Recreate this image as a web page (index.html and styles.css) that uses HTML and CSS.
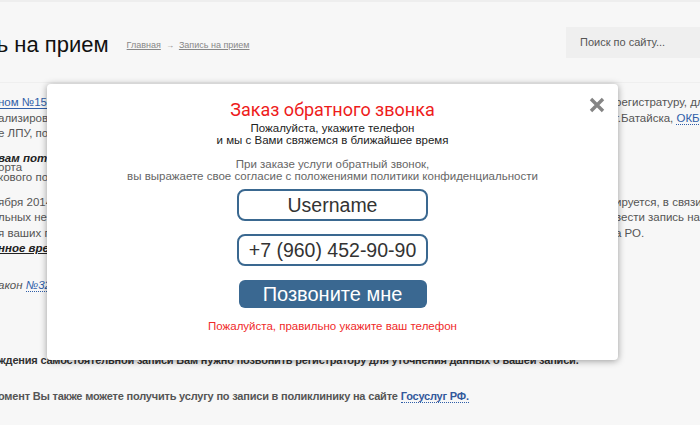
FILE: index.html
```html
<!DOCTYPE html>
<html lang="ru">
<head>
<meta charset="utf-8">
<title>Запись на прием</title>
<link rel="stylesheet" href="styles.css">
</head>
<body>
<div class="page">
  <header class="header">
    <h1 class="title">Запись на прием</h1>
    <nav class="crumbs"><a href="#">Главная</a><span class="arrow">→</span><a href="#">Запись на прием</a></nav>
    <div class="search">Поиск по сайту...</div>
  </header>
  <main class="content">
    <div class="para p1">
      <div class="ln"><span class="l"><a class="lnk solid" href="#">ном №152</a></span><span class="r">регистратуру, для</span></div>
      <div class="ln"><span class="l">ализирова</span><span class="r">г.Батайска, <a class="lnk" href="#">ОКБ РО</a></span></div>
      <div class="ln"><span class="l">е ЛПУ, под</span><span class="r"></span></div>
    </div>
    <div class="para p2">
      <div class="ln"><span class="l bi">вам потр</span><span class="r"></span></div>
      <div class="ln"><span class="l">орта</span><span class="r"></span></div>
      <div class="ln"><span class="l">кового пол</span><span class="r"></span></div>
    </div>
    <div class="para p3">
      <div class="ln"><span class="l">ября 2014</span><span class="r">ируется, в связи с</span></div>
      <div class="ln"><span class="l">льных не</span><span class="r">вести запись на</span></div>
      <div class="ln"><span class="l">я ваших п</span><span class="r">а РО.</span></div>
      <div class="ln"><span class="l bi ul">нное вре</span><span class="r"></span></div>
    </div>
    <div class="para p4">
      <div class="ln"><span class="l it">акон <a class="lnk" href="#">№323</a></span><span class="r"></span></div>
    </div>
    <p class="wide dark">ждения самостоятельной записи Вам нужно позвонить регистратору для уточнения данных о вашей записи.</p>
    <p class="wide grey">омент Вы также можете получить услугу по записи в поликлинику на сайте <a class="lnk" href="#">Госуслуг РФ.</a></p>
  </main>

  <div class="modal">
    <button class="close" aria-label="Закрыть">
      <svg width="16" height="16" viewBox="0 0 16 16"><path d="M2 2 L14 14 M14 2 L2 14" stroke="#858585" stroke-width="3.4" stroke-linecap="butt"/></svg>
    </button>
    <h2 class="m-title">Заказ обратного звонка</h2>
    <p class="m-sub">Пожалуйста, укажите телефон<br>и мы с Вами свяжемся в ближайшее время</p>
    <p class="m-policy">При заказе услуги обратный звонок,<br>вы выражаете свое согласие с положениями политики конфиденциальности</p>
    <input class="field first" type="text" value="Username">
    <input class="field" type="text" value="+7 (960) 452-90-90">
    <button class="call">Позвоните мне</button>
    <p class="m-error">Пожалуйста, правильно укажите ваш телефон</p>
  </div>
</div>
</body>
</html>
```

FILE: styles.css
```css
html, body {
  margin: 0;
  padding: 0;
}
body {
  background: #f7f7f7;
  font-family: "Liberation Sans", Arial, sans-serif;
  overflow: hidden;
  width: 700px;
  height: 425px;
  position: relative;
}
.page {
  width: 700px;
}
.header {
  display: flex;
  align-items: center;
  height: 80px;
  border-top: 2px solid #eeeeee;
  border-bottom: 1px solid #efefef;
}
.title {
  margin: 6px 0 0 -64px;
  font-size: 22px;
  font-weight: normal;
  color: #111;
  line-height: 26px;
  white-space: nowrap;
}
.crumbs {
  margin-left: 18px;
  margin-top: 5px;
  font-size: 9px;
  color: #888;
  white-space: nowrap;
}
.crumbs a {
  color: #888;
  text-decoration: underline;
}
.arrow {
  margin: 0 5px;
  font-size: 8px;
}
.search {
  margin-left: auto;
  width: 134px;
  height: 31px;
  background: #efefef;
  display: flex;
  align-items: center;
  padding-left: 14px;
  box-sizing: border-box;
  font-size: 11px;
  color: #555;
  white-space: nowrap;
}
.content {
  padding-top: 12px;
  font-size: 11.5px;
  color: #555;
}
.para {
  line-height: 15.5px;
}
.p2 {
  margin-top: 12px;
  line-height: 9.5px;
}
.p3 {
  margin-top: 12.5px;
}
.p4 {
  margin-top: 21px;
}
.ln {
  display: grid;
  grid-template-columns: 615px 85px;
  white-space: nowrap;
}
.l, .r {
  overflow: hidden;
  display: block;
}
.l {
  text-indent: -2px;
}
.bi {
  font-weight: bold;
  font-style: italic;
  color: #222;
}
.ul {
  text-decoration: underline;
}
.it {
  font-style: italic;
}
.lnk {
  color: #2f5ea8;
  text-decoration: none;
  border-bottom: 1px dotted #2f5ea8;
}
.lnk.solid {
  border-bottom-style: solid;
}
.wide {
  margin: 0;
  font-size: 11px;
  letter-spacing: -0.2px;
  font-weight: bold;
  white-space: nowrap;
  line-height: 15.5px;
  text-indent: -2px;
}
.wide.dark {
  margin-top: 60px;
  color: #333;
}
.wide.grey {
  margin-top: 20px;
  color: #555;
}
.wide .lnk {
  color: #33599c;
}

.modal {
  position: absolute;
  left: 47px;
  top: 84px;
  width: 571px;
  height: 276px;
  background: #fff;
  border-radius: 4px;
  box-shadow: 0 1px 7px rgba(0, 0, 0, 0.38);
  display: flex;
  flex-direction: column;
  align-items: center;
  box-sizing: border-box;
  padding-top: 15px;
  text-align: center;
}
.close {
  position: absolute;
  top: 13px;
  right: 13px;
  width: 16px;
  height: 16px;
  padding: 0;
  border: 0;
  background: none;
  display: block;
}
.close svg {
  display: block;
}
.m-title {
  margin: 0;
  font-family: Roboto, "Liberation Sans", sans-serif;
  font-weight: normal;
  font-size: 18px;
  line-height: 22px;
  color: #ee1c1c;
}
.m-sub {
  margin: 1px 0 0;
  font-size: 11.5px;
  line-height: 12px;
  color: #222;
}
.m-policy {
  margin: 12px 0 0;
  font-size: 11.5px;
  line-height: 12px;
  color: #666;
}
.field {
  width: 191px;
  height: 32px;
  box-sizing: border-box;
  border: 2px solid #3a6890;
  border-radius: 8px;
  background: #fff;
  font-family: "Liberation Sans", Arial, sans-serif;
  font-size: 19.5px;
  color: #333;
  text-align: center;
  padding: 0 4px;
  margin: 13px 0 0;
  outline: none;
}
.field.first {
  margin-top: 7px;
}
.call {
  margin-top: 14px;
  width: 188px;
  height: 28px;
  border: 0;
  border-radius: 6px;
  background: #3a6891;
  color: #fff;
  font-family: "Liberation Sans", Arial, sans-serif;
  font-size: 20px;
  line-height: 28px;
  padding: 0;
}
.m-error {
  margin: 11px 0 0;
  font-size: 11.5px;
  line-height: 14px;
  color: #f02a2a;
}
```
